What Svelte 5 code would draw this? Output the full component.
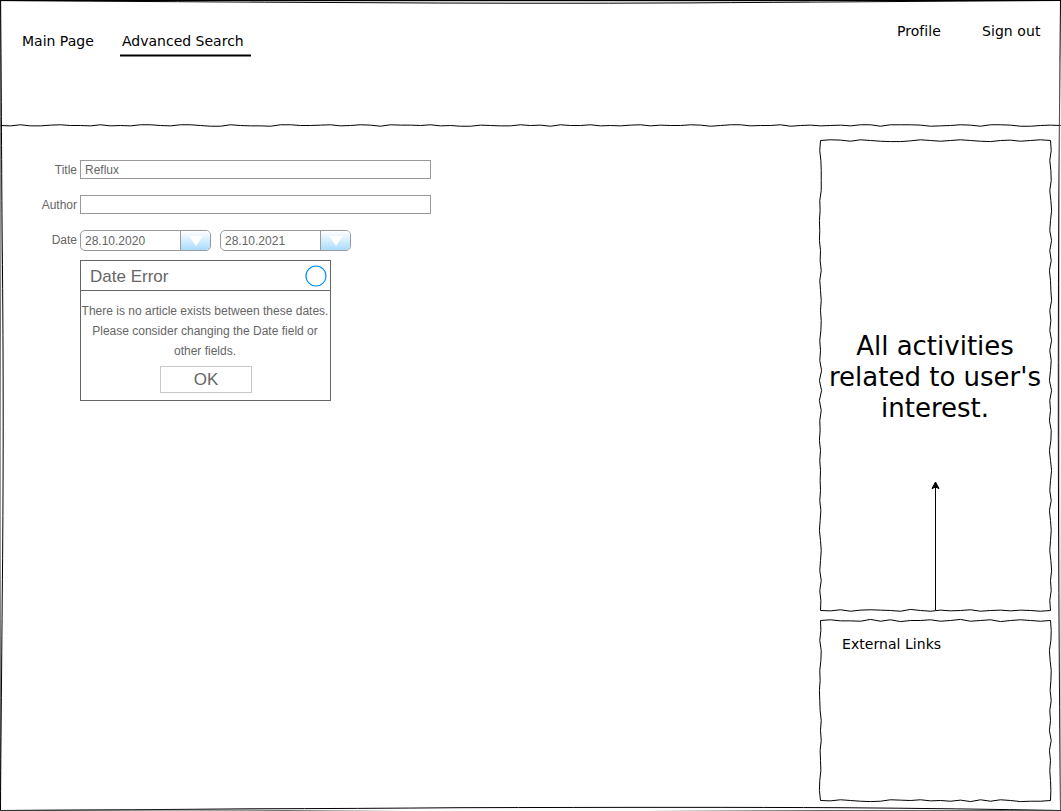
<script>
  const line = (a, at) => 'M' + a.map((v, i) => at(i * 10 + 0.5, v)).join('L');
  const parse = (s) => [...s].map((c) => (Number(c) - 4) * 0.36);

  // Each digit is one 10px step of the hand-drawn stroke; 4 lies on the axis.
  const across = (s, y) => line(parse(s), (p, v) => `${p},${y + v}`);
  const down = (s, x) => line(parse(s), (p, v) => `${x + v},${p}`);

  const divider =
    '4525532445254522452246624556224432542362334254663455243624425453253442364225442643543522622236542362236643444524635544';

  const activities = {
    h: 470,
    top: '423624677524642467436424',
    right: '462562574272614572527264172416514742614642574624',
    bottom: '452632346146354264353464',
    left: '425666231214362464652427171623142434253146426254'
  };
  const links = {
    h: 180,
    top: '425561627442641642742464',
    right: '4651365362416142454',
    bottom: '452467623425463726247664',
    left: '4526523123646345214'
  };
</script>

{#snippet sketch(b)}
  <svg class="edges" width="231" height={b.h + 1} viewBox="0 0 231 {b.h + 1}" aria-hidden="true">
    <path d={across(b.top, 0.5)} />
    <path d={across(b.bottom, b.h + 0.5)} />
    <path d={down(b.left, 0.5)} />
    <path d={down(b.right, 230.5)} />
  </svg>
{/snippet}

{#snippet dateField(value)}
  <div class="date">
    <span class="value">{value}</span>
    <span class="drop">
      <svg width="14" height="10" viewBox="0 0 14 10"><path d="M0 0H14L7 10Z" fill="#fff" /></svg>
    </span>
  </div>
{/snippet}

<div class="page">
  <svg class="frame" width="1061" height="811" viewBox="0 0 1061 811" aria-hidden="true">
    <path class="tint" d="M250 1.5H810" />
    <path d="M0 .5H1061" />
    <path d="M0 .6Q180 1.8 350 2.6Q530 3.7 690 2.9Q850 1.8 1061 .5" />
    <path class="soft" d="M.5 0L.8 250Q-.2 460 .4 640L.5 811" />
    <path d="M.6 0C1.4 100 1.6 170 2.2 240C3.6 370 3.4 490 2.2 600C1.4 700 .7 760 .5 811" />
    <path d="M1060.5 0Q1059.5 110 1058.8 200Q1058 370 1058.5 510Q1059.2 680 1060.5 811" />
    <path class="faint" d="M1059.8 60Q1059 350 1060 560L1060.5 811" />
    <path d="M0 810.5Q140 809.8 250 808.8Q360 808.5 460 807.7Q700 807 840 807.7Q960 808.6 1061 810.5" />
    <path class="soft" d="M0 810.5Q130 809.8 250 810.2Q400 811.6 530 812.4Q700 811 820 810.5L1061 810.5" />
  </svg>

  <header>
    <nav>
      <a class="main-link" href="#main">Main Page</a>
      <a class="current" href="#search">Advanced Search</a>
    </nav>
    <div class="account">
      <a class="profile" href="#profile">Profile</a>
      <a class="signout" href="#out">Sign out</a>
    </div>
    <svg class="divider" width="1061" height="5" viewBox="0 0 1061 5" aria-hidden="true">
      <path d={across(divider, 2.5)} />
    </svg>
  </header>

  <div class="body">
    <main>
      <div class="row"><span class="label">Title</span><div class="input">Reflux</div></div>
      <div class="row"><span class="label">Author</span><div class="input"></div></div>
      <div class="row dates">
        <span class="label">Date</span>
        {@render dateField('28.10.2020')}
        {@render dateField('28.10.2021')}
      </div>
      <section class="dialog">
        <div class="title">
          <span class="heading">Date Error</span>
          <svg width="22" height="22" viewBox="0 0 22 22"><circle cx="11" cy="11" r="10" fill="#fff" stroke="#008cff" stroke-width="1.2" /></svg>
        </div>
        <div class="message">
          <span>There is no article exists between these dates.</span>
          <span>Please consider changing the Date field or</span>
          <span>other fields.</span>
        </div>
        <button>OK</button>
      </section>
    </main>

    <aside>
      <section class="activities">
        {@render sketch(activities)}
        <p><span>All activities</span><span>related to user's</span><span>interest.</span></p>
        <svg class="arrow" width="11" height="130" viewBox="0 0 11 130">
          <path d="M5.5 130V6" /><path d="M5.5 2L9 8.6L5.5 7L2 8.6Z" fill="#000" />
        </svg>
      </section>
      <section class="links">
        {@render sketch(links)}
        <span>External Links</span>
      </section>
    </aside>
  </div>
</div>

<style>
  :global(body) { background: #fff; }
  .page {
    position: relative;
    width: 1061px;
    height: 811px;
    overflow: hidden;
    display: flex;
    flex-direction: column;
    font-family: 'DejaVu Sans', sans-serif;
    font-size: 14px;
    line-height: 17px;
    color: #000;
    white-space: nowrap;
  }
  svg { display: block; flex: none; }
  .frame, .edges { position: absolute; top: 0; left: 0; }
  .edges { overflow: visible; }
  .frame path, .edges path, .divider path, .arrow path { stroke: #000; stroke-width: 1; }
  .frame path, .edges path, .divider path { fill: none; }
  .frame .tint { stroke: #d0cad0; }
  .frame .soft { stroke: #444; stroke-width: 0.8; }
  .frame .faint { stroke: #999; stroke-width: 0.6; }
  header {
    height: 128px;
    box-sizing: border-box;
    display: grid;
    grid-template-columns: 1fr auto;
    grid-template-rows: 123px 5px;
  }
  nav { display: flex; align-items: flex-start; padding: 33px 0 0 22px; }
  a { color: inherit; text-decoration: none; }
  .main-link { width: 98px; }
  .current {
    box-sizing: border-box;
    width: 131px;
    height: 24px;
    padding-left: 2px;
    background: linear-gradient(#808080 1px, #000 1px, #000 2px, #808080 2px) 0 100% / 100% 3px no-repeat;
  }
  .account { display: flex; padding: 23px 20px 0 0; }
  .profile { width: 85px; letter-spacing: 0.05px; }
  .signout { width: 59px; letter-spacing: 0.07px; }
  .divider { grid-column: 1 / 3; }
  .body { display: grid; grid-template-columns: 820px 231px; padding-top: 12px; }
  main {
    padding: 20px 0 0 30px;
    font: 12px/15px 'Liberation Sans', sans-serif;
    color: #666;
  }
  .row { display: flex; height: 19px; margin-bottom: 16px; align-items: center; }
  .label { width: 47px; margin-right: 3px; padding-top: 2px; text-align: right; }
  .input { box-sizing: border-box; width: 351px; height: 19px; border: 1px solid #999; padding: 2px 4px 0; }
  .dates { height: 21px; margin-bottom: 9px; }
  .dates .label { padding-top: 0; }
  .date {
    box-sizing: border-box;
    width: 131px;
    height: 21px;
    margin-right: 9px;
    border: 1px solid #999;
    border-radius: 5px;
    overflow: hidden;
    display: flex;
  }
  .value { flex: 1; padding: 3px 0 0 4px; }
  .drop {
    width: 29px;
    border-left: 1px solid #999;
    background: linear-gradient(#fff, #aadcff);
    display: flex;
    justify-content: center;
    align-items: center;
  }
  .dialog {
    box-sizing: border-box;
    width: 251px;
    height: 141px;
    margin-left: 50px;
    border: 1px solid #666;
    display: flex;
    flex-direction: column;
    align-items: center;
  }
  .title {
    box-sizing: border-box;
    align-self: stretch;
    height: 30px;
    border-bottom: 1px solid #666;
    padding: 0 3.5px 0 9px;
    display: flex;
    justify-content: space-between;
    align-items: center;
    font-size: 17px;
  }
  .heading { padding-top: 2px; }
  .message { display: flex; flex-direction: column; align-items: center; padding: 10px 1px 0 0; line-height: 20px; }
  button {
    margin-top: 5px;
    box-sizing: border-box;
    width: 92px;
    height: 27px;
    padding: 0 0 0 1px;
    border: 1px solid #c8c8c8;
    background: #fff;
    color: #666;
    font: 17px/25px 'Liberation Sans', sans-serif;
  }
  aside { display: flex; flex-direction: column; gap: 9px; }
  .activities, .links { position: relative; }
  .activities { height: 471px; display: flex; flex-direction: column; align-items: center; }
  .activities p {
    margin: 191px 0 0;
    padding-right: 1px;
    height: 93px;
    display: flex;
    flex-direction: column;
    align-items: center;
    font-size: 26px;
    line-height: 31px;
  }
  .arrow { margin-top: 56px; }
  .links { height: 181px; padding: 16px 0 0 22px; box-sizing: border-box; letter-spacing: 0.05px; }
</style>
